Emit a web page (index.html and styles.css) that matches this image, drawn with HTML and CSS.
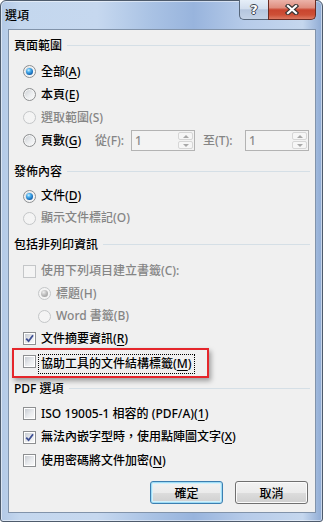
FILE: index.html
```html
<!DOCTYPE html>
<html lang="zh-Hant">
  <head>
    <meta charset="UTF-8" />
    <meta name="viewport" content="width=device-width, initial-scale=1.0" />
    <title>選項</title>
    <link rel="stylesheet" href="styles.css">
  </head>
  <body>
    <div class="window">
      <div class="titlebar">
        <span class="title">選項</span>
        <div class="caps">
          <div class="cap cap-help"><span class="qmark">?</span></div>
          <div class="cap cap-close">
            <svg width="14" height="11" viewBox="0 0 14 11">
              <path d="M3 2 L11 9 M11 2 L3 9" stroke="#3a3434" stroke-width="4.4" stroke-linecap="square" fill="none" />
              <path d="M3 2 L11 9 M11 2 L3 9" stroke="#ffffff" stroke-width="2.2" stroke-linecap="square" fill="none" />
            </svg>
          </div>
        </div>
      </div>

      <div class="client">
        <!-- 頁面範圍 -->
        <section class="group sec-page">
          <div class="group-head">頁面範圍</div>
          <div class="group-body">
            <div class="row"><span class="radio on"></span><span class="label">全部(<u>A</u>)</span></div>
            <div class="row"><span class="radio"></span><span class="label">本頁(<u>E</u>)</span></div>
            <div class="row disabled"><span class="radio"></span><span class="label">選取範圍(S)</span></div>
            <div class="row">
              <span class="radio"></span><span class="label pages">頁數(<u>G</u>)</span>
              <span class="spin-label from">從(F):</span>
              <div class="spin"><span class="spin-val">1</span><span class="spin-btns"><span class="spin-btn up"></span><span class="spin-btn down"></span></span></div>
              <span class="spin-label to">至(T):</span>
              <div class="spin"><span class="spin-val">1</span><span class="spin-btns"><span class="spin-btn up"></span><span class="spin-btn down"></span></span></div>
            </div>
          </div>
        </section>

        <!-- 發佈內容 -->
        <section class="group sec-publish">
          <div class="group-head">發佈內容</div>
          <div class="group-body">
            <div class="row"><span class="radio on"></span><span class="label">文件(<u>D</u>)</span></div>
            <div class="row disabled"><span class="radio"></span><span class="label">顯示文件標記(O)</span></div>
          </div>
        </section>

        <!-- 包括非列印資訊 -->
        <section class="group sec-nonprint">
          <div class="group-head">包括非列印資訊</div>
          <div class="group-body">
            <div class="row disabled"><span class="check"></span><span class="label">使用下列項目建立書籤(C):</span></div>
            <div class="row sub disabled"><span class="radio on"></span><span class="label">標題(H)</span></div>
            <div class="row sub disabled"><span class="radio"></span><span class="label">Word 書籤(B)</span></div>
            <div class="row">
              <span class="check"><svg width="9" height="9" viewBox="0 0 9 9"><path d="M1.2 4.6 L3.6 7.2 L8 1.2" stroke="#3e4f93" stroke-width="1.8" fill="none" /></svg></span>
              <span class="label">文件摘要資訊(<u>R</u>)</span>
            </div>
            <div class="row"><span class="check"></span><span class="label focus">協助工具的文件結構標籤(<u>M</u>)</span></div>
          </div>
        </section>

        <!-- PDF 選項 -->
        <section class="group sec-pdf">
          <div class="group-head">PDF 選項</div>
          <div class="group-body">
            <div class="row"><span class="check"></span><span class="label">ISO 19005-1 相容的 (PDF/A)(<u>1</u>)</span></div>
            <div class="row">
              <span class="check"><svg width="9" height="9" viewBox="0 0 9 9"><path d="M1.2 4.6 L3.6 7.2 L8 1.2" stroke="#3e4f93" stroke-width="1.8" fill="none" /></svg></span>
              <span class="label">無法內嵌字型時，使用點陣圖文字(<u>X</u>)</span>
            </div>
            <div class="row"><span class="check"></span><span class="label">使用密碼將文件加密(<u>N</u>)</span></div>
          </div>
        </section>

        <div class="actions">
          <button class="btn btn-default">確定</button>
          <button class="btn">取消</button>
        </div>

        <div class="highlight"></div>
      </div>
    </div>
  </body>
</html>
```

FILE: styles.css
```css
body {
  margin: 0;
  background-color: #ffffff;
  font-family: "Noto Sans", "Noto Sans CJK TC", sans-serif;
  font-size: 12px;
  font-weight: 500;
  color: #000000;
}
u {
  text-decoration-thickness: 1px;
  text-underline-offset: 2px;
}
.window {
  width: 323px;
  height: 522px;
  box-sizing: border-box;
  border: 1px solid #4e5b6c;
  border-radius: 6px 6px 3px 3px;
  padding: 0 6px 8px 7px;
  display: flex;
  flex-direction: column;
  background: linear-gradient(90deg, #b3c9e6 0%, #c4d7ee 6%, #c6d8ef 30%, #a9c2e4 47%, #98b4dd 60%, #b6cbe9 76%, #c5d7ee 94%, #8fabd4 100%);
  box-shadow: inset 0 0 0 1px rgba(255, 255, 255, 0.5);
}
.titlebar {
  height: 28px;
  display: flex;
  justify-content: space-between;
  align-items: flex-start;
}
.title {
  margin: 7px 0 0 -3px;
  line-height: 16px;
  font-size: 12px;
  color: #000000;
}
.caps {
  display: flex;
  margin-top: -1px;
}
.cap {
  height: 20px;
  box-sizing: border-box;
  border: 1px solid #56667a;
  border-top: none;
  display: flex;
  align-items: center;
  justify-content: center;
}
.cap-help {
  width: 29px;
  border-right: none;
  border-radius: 0 0 0 5px;
  background: linear-gradient(#e6eef8 0%, #d3deee 45%, #b5c6de 52%, #c3d2e6 100%);
}
.qmark {
  font-family: "DejaVu Sans", sans-serif;
  font-weight: bold;
  font-size: 13px;
  line-height: 14px;
  color: #ffffff;
  text-shadow: 1px 0 #3c4450, -1px 0 #3c4450, 0 1px #3c4450, 0 -1px #3c4450;
}
.cap-close {
  width: 48px;
  border-color: #6a2b22;
  border-radius: 0 0 5px 0;
  background: linear-gradient(#ebb3a9 0%, #df8e7f 40%, #c9452f 52%, #cd4f36 78%, #dc7a63 100%);
}
.client {
  flex: 1;
  position: relative;
  border: 1px solid #8193aa;
  background-color: #f0f0f0;
  padding: 8px 5px 7px 5px;
  display: flex;
  flex-direction: column;
}
.group-head {
  height: 16px;
  line-height: 16px;
  display: flex;
  align-items: center;
}
.group-head::after {
  content: "";
  flex: 1;
  height: 1px;
  margin: -1px 0 0 5px;
  background-color: #d5dfe6;
}
.sec-page .group-body { margin-top: 6px; }
.sec-page .row { height: 23px; }
.sec-publish { margin-top: 12px; }
.sec-publish .group-body { margin-top: 5px; }
.sec-publish .row { height: 22px; }
.sec-nonprint { margin-top: 8px; }
.sec-nonprint .group-body { margin-top: 7px; }
.sec-nonprint .row { height: 22.5px; }
.sec-pdf { margin-top: 8.5px; }
.sec-pdf .group-body { margin-top: 5px; }
.sec-pdf .row { height: 23.5px; }
.row {
  display: flex;
  align-items: center;
  padding-left: 9px;
  line-height: 16px;
  white-space: nowrap;
}
.row.sub {
  padding-left: 24px;
}
.row .label {
  margin-left: 5px;
}
.row.disabled .label {
  color: #858585;
}
.label.pages {
  width: 54px;
}
.label.focus {
  margin-left: 2px;
  margin-top: 5px;
  padding: 1px 2px 1px 2px;
  border: 1px dotted #000000;
}
.radio {
  width: 13px;
  height: 13px;
  flex: none;
  box-sizing: border-box;
  border-radius: 50%;
  border: 1px solid #8d8f91;
  background: linear-gradient(135deg, #c9ccd1 0%, #eceef0 55%, #fbfbfb 100%);
  box-shadow: inset 0 0 0 1px #f6f6f6;
  display: flex;
  align-items: center;
  justify-content: center;
}
.radio.on::after {
  content: "";
  width: 7px;
  height: 7px;
  border-radius: 50%;
  background: radial-gradient(circle at 38% 32%, #d2f2ff 0%, #4cb0ee 30%, #1466b3 70%, #0c3f7c 100%);
}
.disabled .radio {
  border-color: #c4c6c8;
  background: #f4f4f4;
  box-shadow: none;
}
.disabled .radio.on::after {
  background: radial-gradient(circle at 38% 32%, #eeeeee 0%, #bdbdbd 45%, #8f8f8f 100%);
}
.check {
  width: 13px;
  height: 13px;
  flex: none;
  box-sizing: border-box;
  border: 1px solid #8d8f91;
  padding: 1px;
  background: linear-gradient(135deg, #c8ccd2 0%, #e9ebee 55%, #f8f8f8 100%) content-box, #ffffff;
  display: flex;
  align-items: center;
  justify-content: center;
}
.check svg {
  display: block;
}
.disabled .check {
  border-color: #c4c6c8;
  background: #f4f4f4;
}
.spin-label {
  color: #858585;
}
.spin-label.from {
  width: 36px;
}
.spin-label.to {
  width: 42px;
  margin-left: 8px;
}
.spin {
  width: 64px;
  height: 21px;
  box-sizing: border-box;
  border: 1px solid #b3b3b3;
  background-color: #f3f3f3;
  display: flex;
  align-items: center;
}
.spin-val {
  flex: 1;
  padding-left: 3px;
  color: #8a8a8a;
}
.spin-btns {
  width: 15px;
  height: 17px;
  margin-right: 1px;
  display: flex;
  flex-direction: column;
  gap: 1px;
}
.spin-btn {
  flex: 1;
  box-sizing: border-box;
  border: 1px solid #d6d6d6;
  border-radius: 2px;
  background-color: #f6f6f6;
  display: flex;
  align-items: center;
  justify-content: center;
}
.spin-btn::after {
  content: "";
  border-left: 3px solid transparent;
  border-right: 3px solid transparent;
}
.spin-btn.up::after {
  border-bottom: 3px solid #a8a8a8;
}
.spin-btn.down::after {
  border-top: 3px solid #a8a8a8;
}
.actions {
  margin-top: 8.5px;
  margin-right: 2px;
  display: flex;
  justify-content: flex-end;
  gap: 12px;
}
.btn {
  width: 73px;
  height: 23px;
  padding: 0;
  border: 1px solid #707070;
  border-radius: 3px;
  background: linear-gradient(#f2f2f2 0%, #ebebeb 50%, #dddddd 51%, #cfcfcf 100%);
  box-shadow: inset 0 0 0 1px #fbfbfb;
  font-family: "Noto Sans", "Noto Sans CJK TC", sans-serif;
  font-size: 12px;
  font-weight: 500;
  color: #000000;
}
.btn-default {
  border-color: #3c7fb1;
  box-shadow: inset 0 0 0 1px #9fdcf5, inset 0 0 0 2px #d4f1fc;
}
.highlight {
  position: absolute;
  left: 3px;
  top: 318px;
  width: 197px;
  height: 30px;
  box-sizing: border-box;
  border: 2px solid #e5262b;
  box-shadow: 2px 3px 5px rgba(0, 0, 0, 0.35);
}
```
